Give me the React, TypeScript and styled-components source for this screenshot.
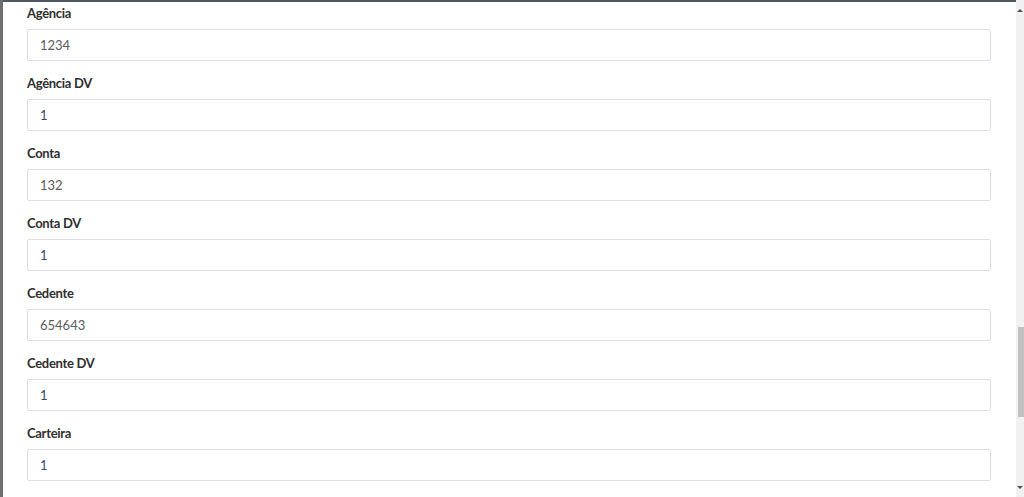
import React from 'react';
import styled, { createGlobalStyle } from 'styled-components';

const GlobalStyle = createGlobalStyle`
  html, body {
    margin: 0;
    padding: 0;
    background: #ffffff;
    overflow: hidden;
  }
`;

const Screen = styled.div`
  display: flex;
  width: 1024px;
  height: 497px;
  overflow: hidden;
  font-family: Lato, "Open Sans", sans-serif;
`;

const Backdrop = styled.div`
  width: 3px;
  background: #6f6f6f;
  flex-shrink: 0;
`;

const Modal = styled.div`
  flex: 1;
  display: flex;
  flex-direction: column;
  border-top: 2px solid #4d5a64;
  background: #ffffff;
`;

const Body = styled.div`
  display: flex;
  flex-direction: column;
  gap: 12px;
  padding: 1px 25px 0 24px;
`;

const Field = styled.div`
  display: flex;
  flex-direction: column;
  gap: 6px;
`;

const Label = styled.label`
  font-size: 13px;
  line-height: 20px;
  font-weight: 700;
  letter-spacing: -0.3px;
  color: #2e2e2e;
`;

const Input = styled.input<{ $dark?: boolean }>`
  box-sizing: border-box;
  height: 32px;
  width: 100%;
  padding: 0 12px;
  border: 1px solid #dcdde5;
  border-radius: 2px;
  font-family: inherit;
  font-size: 13px;
  color: ${p => (p.$dark ? '#3b4566' : '#5a5a5a')};
  background: #ffffff;
  outline: none;
`;

const Scrollbar = styled.div`
  width: 8px;
  flex-shrink: 0;
  display: flex;
  flex-direction: column;
  align-items: center;
  background: #f1f1f1;
`;

const Arrow = styled.div<{ $down?: boolean }>`
  height: 20px;
  display: flex;
  align-items: center;
  justify-content: center;
  &::after {
    content: '';
    border-left: 3px solid transparent;
    border-right: 3px solid transparent;
    ${p => (p.$down ? 'border-top: 3px solid #505050;' : 'border-bottom: 3px solid #505050;')}
  }
`;

const Track = styled.div`
  flex: 1;
  width: 100%;
  display: flex;
  flex-direction: column;
  align-items: center;
`;

const Thumb = styled.div`
  width: 6px;
  margin-left: 1px;
  background: #c1c1c1;
`;

const fields = [
  { label: 'Agência', value: '1234' },
  { label: 'Agência DV', value: '1', dark: true },
  { label: 'Conta', value: '132' },
  { label: 'Conta DV', value: '1', dark: true },
  { label: 'Cedente', value: '654643' },
  { label: 'Cedente DV', value: '1', dark: true },
  { label: 'Carteira', value: '1', dark: true },
];

function App() {
  const thumbTop = 307;
  const thumbHeight = 90;

  return (
    <>
      <GlobalStyle />
      <Screen>
        <Backdrop />
        <Modal>
          <Body>
            {fields.map(f => (
              <Field key={f.label}>
                <Label>{f.label}</Label>
                <Input $dark={f.dark} defaultValue={f.value} readOnly />
              </Field>
            ))}
          </Body>
        </Modal>
        <Scrollbar>
          <Arrow />
          <Track>
            <Thumb style={{ marginTop: thumbTop, height: thumbHeight }} />
          </Track>
          <Arrow $down />
        </Scrollbar>
      </Screen>
    </>
  );
}

export default App;
